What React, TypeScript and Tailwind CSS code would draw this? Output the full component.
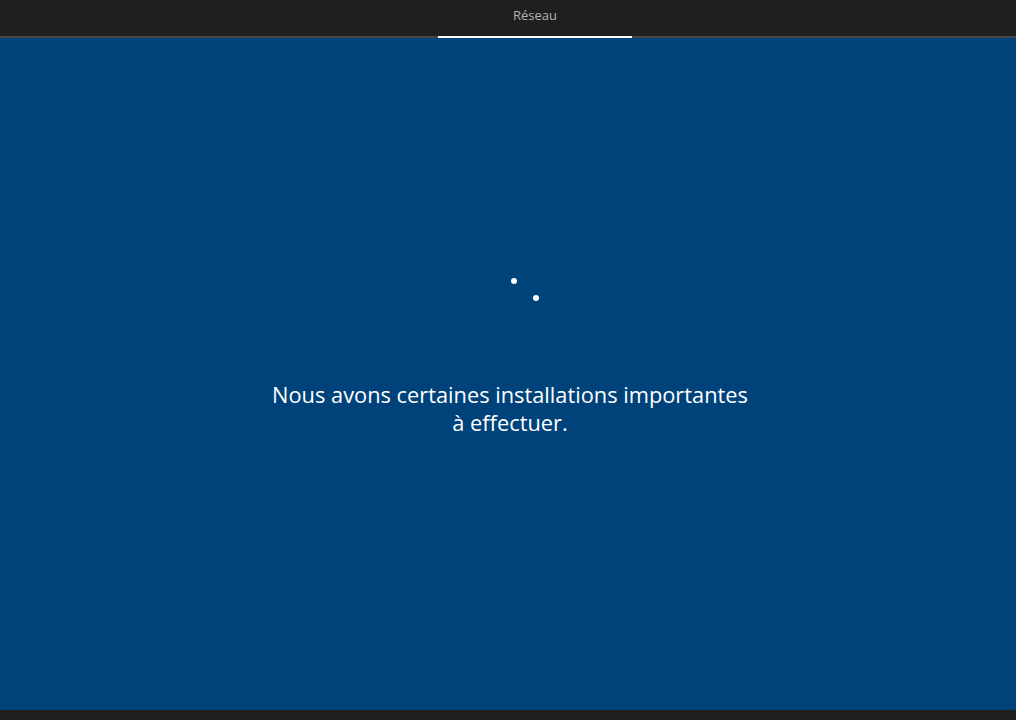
export default function App() {
  return (
    <div className="flex h-[720px] w-[1016px] flex-col bg-[#00437a] font-['Open_Sans',sans-serif]">
      {/* Top tab bar */}
      <header className="flex h-[38px] justify-center border-b-2 border-[#474747] bg-[#1f1f1f] pl-[54px]">
        <div className="relative flex w-[194px] items-center justify-center pb-[4px] text-[13px] text-[#b4b4b4]">
          Réseau
          <span className="absolute -bottom-[2px] left-0 h-[2px] w-full bg-white" />
        </div>
      </header>

      <main className="flex flex-1 flex-col items-center">
        {/* spinner dots */}
        <div className="relative ml-[34px] mt-[240px] h-[24px] w-[30px]">
          <span className="absolute left-[1px] top-[0px] h-[6px] w-[6px] rounded-full bg-white" />
          <span className="absolute left-[23px] top-[17px] h-[6px] w-[6px] rounded-full bg-white" />
        </div>
        <p className="ml-[4px] mt-[79px] w-[540px] text-center text-[21.8px] leading-[28px] text-white">
          Nous avons certaines installations importantes
          <br />à effectuer.
        </p>
      </main>

      <footer className="h-[10px] bg-[#1f1f1f]" />
    </div>
  )
}
